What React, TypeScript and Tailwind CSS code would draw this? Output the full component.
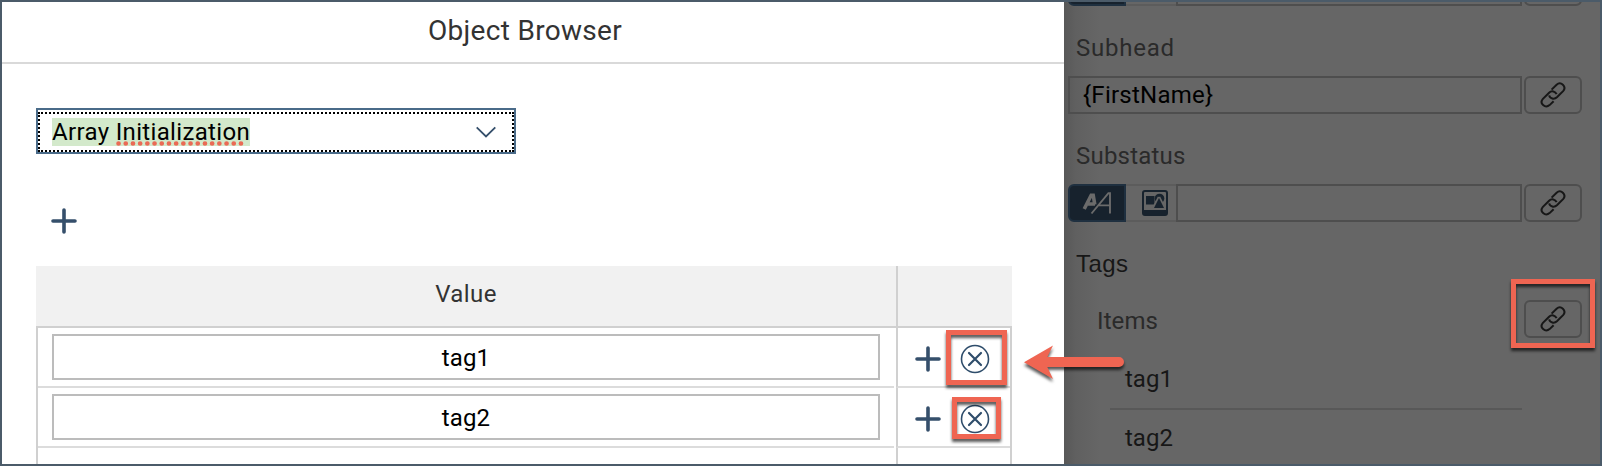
import React from "react";

function LinkIcon() {
  return (
    <svg width="26" height="26" viewBox="0 0 26 26" fill="none" stroke="#171717" strokeWidth="2" strokeLinecap="butt">
      <path d="M11.6 7.6L16.6 2.7C20.8 -1.2 27 4.6 23.1 9.1L16.9 15.3C14.2 17.8 9.8 16.6 9.2 13.4" />
      <path d="M13.6 19.2L9.6 23.1C5.2 27 -1 21.2 2.9 16.9L9.1 10.7C11.6 8.3 15.4 9.4 16.6 12.2" />
    </svg>
  );
}

function Plus() {
  return (
    <svg className="block" width="26" height="26" viewBox="0 0 26 26" stroke="#354f6b" strokeWidth="3.6" strokeLinecap="round">
      <path d="M13 2V24M2 13H24" />
    </svg>
  );
}

function Decline() {
  return (
    <svg className="block" width="30" height="30" viewBox="0 0 30 30" fill="none" stroke="#2f4d6b" strokeLinecap="round">
      <circle cx="15" cy="15" r="13.5" strokeWidth="1.6" />
      <path d="M9 9L21 21M21 9L9 21" strokeWidth="2.2" />
    </svg>
  );
}

function ModeButtons() {
  return (
    <>
      <div className="flex h-full w-[58px] items-center justify-center rounded-l-[6px] border-2 border-[#1f3040] bg-[#17222d]">
        <svg width="30" height="24" viewBox="0 0 30 24" fill="none" stroke="#6b6b6b">
          <path d="M2.2 18L9.2 4.2H11.2L12.8 13.5M6 13H13" strokeWidth="3.6" />
          <path d="M9.5 22.5L26.4 2.2H28V22.5M16.8 14.4H28" strokeWidth="1.9" />
        </svg>
      </div>
      <div className="flex h-full w-[50px] items-center justify-center border-y-2 border-[#5c5c5c] pl-[8px]">
        <svg width="26" height="26" viewBox="0 0 26 26">
          <rect x="1" y="1" width="24" height="24" rx="2" fill="none" stroke="#17222d" strokeWidth="2" />
          <path d="M1 20H25V24Q25 25 24 25H2Q1 25 1 24Z" fill="#17222d" />
          <rect x="4" y="6" width="8.5" height="8.5" fill="#17222d" />
          <circle cx="17.5" cy="8.5" r="4.8" fill="#17222d" />
          <path d="M17 7L11.4 18M17 7L22.6 18" stroke="#666" strokeWidth="2.6" />
          <path d="M17 8L22 18H12Z" fill="#17222d" />
        </svg>
      </div>
    </>
  );
}

function LinkButton() {
  return (
    <div className="ml-[2px] flex h-[38px] w-[58px] shrink-0 items-center justify-center rounded-[6px] border-2 border-[#4e4e4e]">
      <LinkIcon />
    </div>
  );
}

function Row({ value }: { value: string }) {
  return (
    <div className="flex h-[60px]">
      <div className="h-full w-[856px] border-b-2 border-[#dcdcdc] pt-[6px] pl-[14px]">
        <div className="flex h-[46px] w-[828px] items-center justify-center border-2 border-[#bcbcbc] pt-px text-black">
          <span className="tracking-[0.1px]">{value}</span>
        </div>
      </div>
      <div className="ml-[2px] flex h-full flex-1 items-center gap-[19px] border-b-2 border-l-2 border-b-[#dcdcdc] border-l-[#d0d0d0] pt-[4px] pl-[17px]">
        <Plus />
        <Decline />
      </div>
    </div>
  );
}

const mark = "absolute border-[5px] border-[#ef6552] [filter:drop-shadow(0_3px_1.5px_rgba(0,0,0,.65))]";

export default function App() {
  return (
    <div className="relative flex h-[466px] w-[1602px] overflow-hidden border-2 border-[#4b5b69] bg-white font-['Roboto',sans-serif] text-[24px] leading-[30px] text-[#32363a]">
      <main className="h-full w-[1062px] shrink-0 overflow-hidden">
        <header className="flex h-[62px] items-center justify-center border-b-2 border-[#d9d9d9] pr-[16px] pb-[3px] text-[28px] text-[#333]">
          <span className="tracking-[0.3px]">Object Browser</span>
        </header>
        <div className="pl-[34px]">
          <div className="mt-[44px] h-[46px] w-[480px] border-2 border-[#4a6b89] pt-[2px]">
            <div className="flex h-[40px] w-[476px] items-center justify-between border-2 border-dotted border-black pr-[16px] pl-[12px]">
              <div className="relative h-[28px] w-[198px] bg-[#d3e9cb] leading-[28px] whitespace-nowrap text-black">
                <span className="tracking-[0.34px]">Array Initialization</span>
                <svg className="absolute top-[23px] left-[64px]" width="131" height="5">
                  <path d="M2.5 2.5H129" stroke="#ea6a55" strokeWidth="4.6" strokeLinecap="round" strokeDasharray="0.1 7.1" />
                </svg>
              </div>
              <svg width="20" height="12" viewBox="0 0 20 12" fill="none" stroke="#354f6b" strokeWidth="1.8">
                <path d="M.7 1.3L10 10.5L19.3 1.3" />
              </svg>
            </div>
          </div>
          <div className="mt-[54px] pl-[15px]">
            <Plus />
          </div>
          <section className="mt-[32px] w-[976px]">
            <div className="flex h-[62px] border-b-2 border-[#d0d0d0] bg-[#f1f1f1]">
              <div className="w-[860px] pt-[13px] text-center text-[#333]">
                <span className="tracking-[0.4px]">Value</span>
              </div>
              <div className="flex-1 border-l-2 border-[#d0d0d0]" />
            </div>
            <div className="border-x-2 border-[#d0d0d0]">
              <Row value="tag1" />
              <Row value="tag2" />
              <div className="flex h-[60px]">
                <div className="ml-[858px] border-l-2 border-[#d0d0d0]" />
              </div>
            </div>
          </section>
        </div>
      </main>
      <aside className="h-full flex-1 overflow-hidden bg-[linear-gradient(90deg,#585858_0,#606060_12px,#666_36px)] pl-[4px] text-[#2a2a2a]">
        <div className="-mt-[34px] flex h-[38px]">
          <ModeButtons />
          <div className="h-full w-[346px] border-2 border-[#4e4e4e]" />
          <LinkButton />
        </div>
        <div className="mt-[27px] h-[43px] pl-[8px]">
          <span className="tracking-[0.75px]">Subhead</span>
        </div>
        <div className="flex h-[38px]">
          <div className="flex w-[454px] items-center border-2 border-[#4e4e4e] pl-[13px] text-black">
            <span className="tracking-[0.25px]">{"{FirstName}"}</span>
          </div>
          <LinkButton />
        </div>
        <div className="mt-[27px] h-[43px] pl-[8px]">
          <span className="tracking-[0.2px]">Substatus</span>
        </div>
        <div className="flex h-[38px]">
          <ModeButtons />
          <div className="h-full w-[346px] border-2 border-[#4e4e4e]" />
          <LinkButton />
        </div>
        <div className="mt-[27px] h-[29px] pl-[8px] font-['Liberation_Sans',sans-serif] text-[#171717]">
          <span className="tracking-[0.4px]">Tags</span>
        </div>
        <div className="mt-[22px] flex h-[38px] pl-[29px]">
          <div className="w-[425px] pt-[6px]">
            <span className="tracking-[0.1px]">Items</span>
          </div>
          <LinkButton />
        </div>
        <div className="ml-[42px] h-[72px] w-[412px] border-b-2 border-[#585858] pt-[26px] pl-[15px] text-[#171717]">tag1</div>
        <div className="ml-[42px] pt-[13px] pl-[15px] text-[#171717]">tag2</div>
      </aside>
      <div className={`${mark} top-[328px] left-[944px] h-[55px] w-[61px]`} />
      <div className={`${mark} top-[395px] left-[950px] h-[42px] w-[49px]`} />
      <div className={`${mark} top-[277px] left-[1509px] h-[69px] w-[84px]`} />
      <svg className="absolute top-[338px] left-[1018px] [filter:drop-shadow(0_3px_1.5px_rgba(0,0,0,.65))]" width="112" height="48" viewBox="0 0 112 48" fill="#ef6552">
        <path d="M4 22.3L33 5.5L27.3 17H99A5 5 0 0 1 99 27H27.3L33 39Z" />
      </svg>
    </div>
  );
}
